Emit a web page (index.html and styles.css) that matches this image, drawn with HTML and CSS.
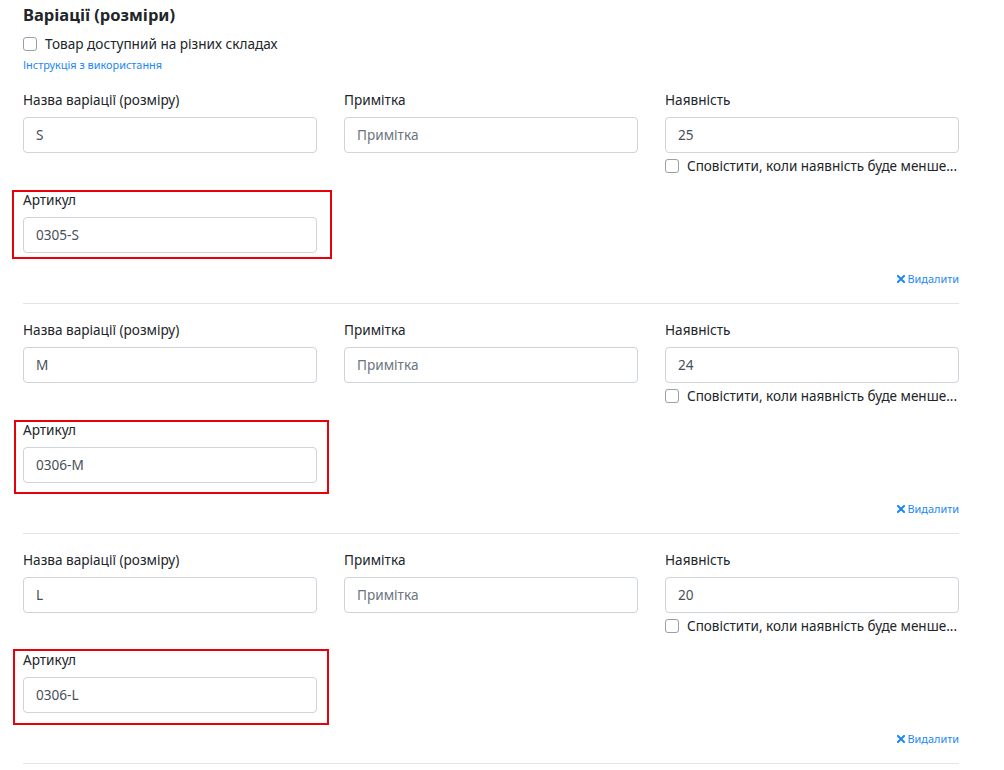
FILE: index.html
```html
<!DOCTYPE html>
<html lang="uk">
<head>
<meta charset="utf-8">
<link rel="stylesheet" href="styles.css">
</head>
<body>
<div class="page">
  <h2 class="title">Варіації (розміри)</h2>
  <label class="check top-check"><span class="box"></span>Товар доступний на різних складах</label>
  <a class="guide" href="#">Інструкція з використання</a>

  <div class="variant">
    <div class="row">
      <div class="field"><div class="label">Назва варіації (розміру)</div><div class="input">S</div></div>
      <div class="field"><div class="label">Примітка</div><div class="input ph">Примітка</div></div>
      <div class="field"><div class="label">Наявність</div><div class="input">25</div>
        <label class="check small"><span class="box"></span><span class="ctext">Сповістити, коли наявність буде менше...</span></label></div>
    </div>
    <div class="row second">
      <div class="field"><div class="label">Артикул</div><div class="input">0305-S</div><span class="redbox rb1"></span></div>
    </div>
    <div class="del"><a href="#"><svg width="8" height="8" viewBox="0 0 8 8"><path d="M1 1L7 7M7 1L1 7" stroke="#1a87f5" stroke-width="2" stroke-linecap="square"/></svg>Видалити</a></div>
  </div>

  <div class="variant">
    <div class="row">
      <div class="field"><div class="label">Назва варіації (розміру)</div><div class="input">M</div></div>
      <div class="field"><div class="label">Примітка</div><div class="input ph">Примітка</div></div>
      <div class="field"><div class="label">Наявність</div><div class="input">24</div>
        <label class="check small"><span class="box"></span><span class="ctext">Сповістити, коли наявність буде менше...</span></label></div>
    </div>
    <div class="row second">
      <div class="field"><div class="label">Артикул</div><div class="input">0306-M</div><span class="redbox rb2"></span></div>
    </div>
    <div class="del"><a href="#"><svg width="8" height="8" viewBox="0 0 8 8"><path d="M1 1L7 7M7 1L1 7" stroke="#1a87f5" stroke-width="2" stroke-linecap="square"/></svg>Видалити</a></div>
  </div>

  <div class="variant">
    <div class="row">
      <div class="field"><div class="label">Назва варіації (розміру)</div><div class="input">L</div></div>
      <div class="field"><div class="label">Примітка</div><div class="input ph">Примітка</div></div>
      <div class="field"><div class="label">Наявність</div><div class="input">20</div>
        <label class="check small"><span class="box"></span><span class="ctext">Сповістити, коли наявність буде менше...</span></label></div>
    </div>
    <div class="row second">
      <div class="field"><div class="label">Артикул</div><div class="input">0306-L</div><span class="redbox rb3"></span></div>
    </div>
    <div class="del"><a href="#"><svg width="8" height="8" viewBox="0 0 8 8"><path d="M1 1L7 7M7 1L1 7" stroke="#1a87f5" stroke-width="2" stroke-linecap="square"/></svg>Видалити</a></div>
  </div>
</div>
</body>
</html>
```

FILE: styles.css
```css
* { box-sizing: border-box; }
html, body { margin: 0; padding: 0; background: #fff; }
body {
  font-family: "Noto Sans", "Open Sans", sans-serif;
  font-size: 13.6px;
  color: #212529;
  width: 1004px;
  height: 770px;
  overflow: hidden;
}
.page {
  padding: 4px 0 0 23px;
  width: 959px;
}
.title {
  margin: 0;
  font-size: 16.5px;
  font-weight: 700;
  line-height: 22px;
  color: #212529;
}
.check {
  display: flex;
  align-items: center;
  gap: 8px;
  line-height: 18px;
}
.top-check { margin-top: 9px; }
.box {
  width: 14px;
  height: 14px;
  border: 1px solid #9aa0a6;
  border-radius: 3px;
  background: #fff;
  flex: none;
}
.guide {
  display: block;
  margin-top: 4px;
  font-size: 10.9px;
  line-height: 16px;
  color: #1a87f5;
  text-decoration: none;
}
.variant {
  padding-top: 17px;
  border-bottom: 1px solid #e4e4e4;
}
.guide + .variant { padding-top: 18px; }
.row {
  display: grid;
  grid-template-columns: 294px 294px 294px;
  column-gap: 27px;
}
.row.second { margin-top: 16px; }
.field { position: relative; }
.label {
  line-height: 18px;
  margin-bottom: 8px;
}
.input {
  height: 36px;
  border: 1px solid #ced4da;
  border-radius: 4px;
  padding: 0 12px;
  line-height: 34px;
  color: #495057;
}
.input.ph { color: #6c757d; }
.check.small {
  margin-top: 4px;
  white-space: nowrap;
}
.ctext {
  font-size: 13.5px;
}
.del {
  display: flex;
  justify-content: flex-end;
  margin-top: 18px;
  padding-bottom: 16px;
}
.del a {
  display: flex;
  align-items: center;
  gap: 3px;
  font-size: 10.9px;
  line-height: 16px;
  color: #1a87f5;
  text-decoration: none;
}
.redbox {
  position: absolute;
  border: 2px solid #e8000b;
  pointer-events: none;
}
.rb1 { left: -11px; top: -1px; width: 320px; height: 69px; }
.rb2 { left: -9px; top: -1px; width: 315px; height: 74px; }
.rb3 { left: -10px; top: -2px; width: 316px; height: 76px; }
```
